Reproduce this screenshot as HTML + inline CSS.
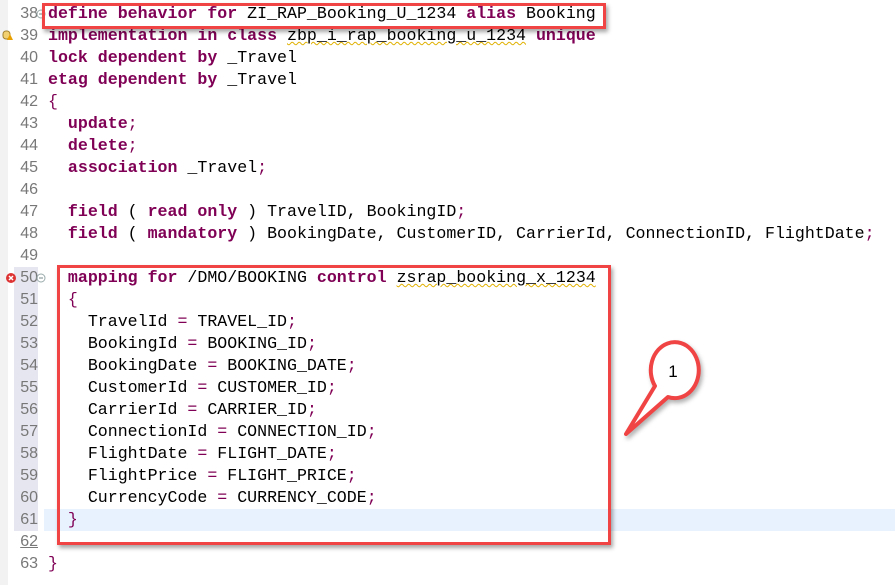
<!DOCTYPE html>
<html><head><meta charset="utf-8"><style>
html,body{margin:0;padding:0;background:#fff;width:895px;height:585px;overflow:hidden;position:relative}
.ln{position:absolute;left:14px;width:24px;text-align:right;font:16px "Liberation Sans",sans-serif;color:#787878;height:22px;line-height:22px}
.code{position:absolute;left:48px;font:16.6px/22px "Liberation Mono",monospace;color:#000;white-space:pre;margin:0}
b{color:#7f0055;font-weight:bold}
.p{color:#7f0055}
.gut{position:absolute;left:0;top:0;width:8px;height:585px;background:#f2f2f2}
.lav{position:absolute;left:14px;top:267px;width:24px;height:264px;background:#e6e6f0}
.hl{position:absolute;left:44px;top:509px;width:851px;height:22px;background:#e8f2fe}
.box{position:absolute;border:3px solid #f04444;box-shadow:2px 3px 4px rgba(0,0,0,.35)}
.sq{text-decoration:underline wavy #e0b000;text-decoration-thickness:1px}
</style></head><body>
<div class="gut"></div>
<div class="lav"></div>
<div class="hl"></div>
<div class="code" style="top:3px"><b>define behavior for</b> ZI_RAP_Booking_U_1234 <b>alias</b> Booking
<b>implementation in class</b> <span class="sq">zbp_i_rap_booking_u_1234</span> <b>unique</b>
<b>lock dependent by</b> _Travel
<b>etag dependent by</b> _Travel
<span class="p">{</span>
  <b>update</b><span class="p">;</span>
  <b>delete</b><span class="p">;</span>
  <b>association</b> _Travel<span class="p">;</span>

  <b>field</b> ( <b>read only</b> ) TravelID, BookingID<span class="p">;</span>
  <b>field</b> ( <b>mandatory</b> ) BookingDate, CustomerID, CarrierId, ConnectionID, FlightDate<span class="p">;</span>

  <b>mapping for</b> /DMO/BOOKING <b>control</b> <span class="sq">zsrap_booking_x_1234</span>
  <span class="p">{</span>
    TravelId <span class="p">=</span> TRAVEL_ID<span class="p">;</span>
    BookingId <span class="p">=</span> BOOKING_ID<span class="p">;</span>
    BookingDate <span class="p">=</span> BOOKING_DATE<span class="p">;</span>
    CustomerId <span class="p">=</span> CUSTOMER_ID<span class="p">;</span>
    CarrierId <span class="p">=</span> CARRIER_ID<span class="p">;</span>
    ConnectionId <span class="p">=</span> CONNECTION_ID<span class="p">;</span>
    FlightDate <span class="p">=</span> FLIGHT_DATE<span class="p">;</span>
    FlightPrice <span class="p">=</span> FLIGHT_PRICE<span class="p">;</span>
    CurrencyCode <span class="p">=</span> CURRENCY_CODE<span class="p">;</span>
  <span class="p">}</span>

<span class="p">}</span></div>
<div class="ln" style="top:3px">38</div><div class="ln" style="top:25px">39</div><div class="ln" style="top:47px">40</div><div class="ln" style="top:69px">41</div><div class="ln" style="top:91px">42</div><div class="ln" style="top:113px">43</div><div class="ln" style="top:135px">44</div><div class="ln" style="top:157px">45</div><div class="ln" style="top:179px">46</div><div class="ln" style="top:201px">47</div><div class="ln" style="top:223px">48</div><div class="ln" style="top:245px">49</div><div class="ln" style="top:267px">50</div><div class="ln" style="top:289px">51</div><div class="ln" style="top:311px">52</div><div class="ln" style="top:333px">53</div><div class="ln" style="top:355px">54</div><div class="ln" style="top:377px">55</div><div class="ln" style="top:399px">56</div><div class="ln" style="top:421px">57</div><div class="ln" style="top:443px">58</div><div class="ln" style="top:465px">59</div><div class="ln" style="top:487px">60</div><div class="ln" style="top:509px">61</div><div class="ln" style="top:531px;text-decoration:underline">62</div><div class="ln" style="top:553px">63</div>
<svg style="position:absolute;left:0;top:0" width="50" height="585">
<circle cx="41" cy="14" r="4" fill="none" stroke="#9aa" stroke-width="1"/><line x1="39" y1="14" x2="43" y2="14" stroke="#788"/>
<circle cx="41" cy="278" r="4" fill="none" stroke="#9aa" stroke-width="1"/><line x1="39" y1="278" x2="43" y2="278" stroke="#788"/>
<circle cx="11" cy="278" r="5" fill="#d33"/><path d="M9 276l4 4M13 276l-4 4" stroke="#fff" stroke-width="1.5"/>
<rect x="3" y="31" width="7" height="8" rx="3" fill="#f0d070" stroke="#a08030"/><path d="M10 34l3 6h-6z" fill="#e8a000"/>
</svg>
<div class="box" style="left:42px;top:3px;width:558px;height:20px"></div>
<div class="box" style="left:57px;top:265px;width:548px;height:274px"></div>
<svg style="position:absolute;left:615px;top:335px" width="100" height="110">
<path d="M53 62 A24 28 0 1 0 40 51 L11 99 Z" fill="#fff" stroke="#f04444" stroke-width="4" stroke-linejoin="round" style="filter:drop-shadow(2px 3px 2px rgba(0,0,0,.3))"/>
<text x="58" y="42" font-family="Liberation Sans,sans-serif" font-size="17" text-anchor="middle" fill="#000">1</text>
</svg>
</body></html>
